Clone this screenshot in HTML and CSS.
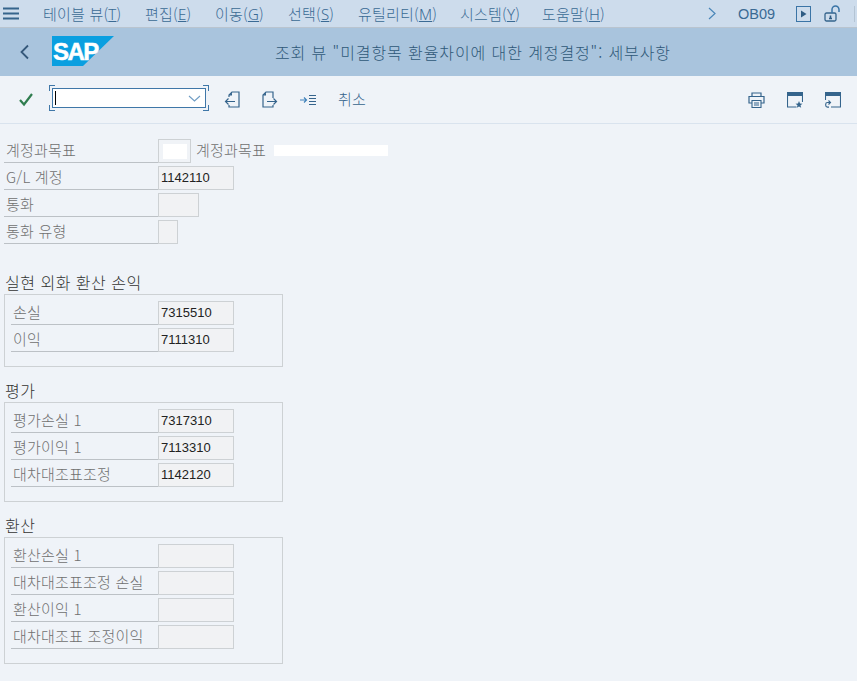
FILE: index.html
```html
<!DOCTYPE html>
<html lang="ko">
<head>
<meta charset="utf-8">
<title>SAP</title>
<link rel="stylesheet" href="styles.css">
</head>
<body>
<header class="menubar">
  <svg class="hamburger" width="18" height="13" viewBox="0 0 18 13"><path d="M1 1.500h16M1 6.500h16M1 11.500h16" stroke="#35648c" stroke-width="2.200"/></svg>
  <nav class="menus">
    <span class="m1">테이블 뷰(<u>T</u>)</span>
    <span class="m2">편집(<u>E</u>)</span>
    <span class="m3">이동(<u>G</u>)</span>
    <span class="m4">선택(<u>S</u>)</span>
    <span class="m5">유틸리티(<u>M</u>)</span>
    <span class="m6">시스템(<u>Y</u>)</span>
    <span class="m7">도움말(<u>H</u>)</span>
  </nav>
  <div class="menu-right">
    <svg width="8" height="13" viewBox="0 0 8 13"><path d="M1 1l6 5.500-6 5.500" fill="none" stroke="#4a86b8" stroke-width="1.200"/></svg>
    <span class="tcode">OB09</span>
    <svg class="play" width="15" height="16" viewBox="0 0 15 16"><rect x=".5" y=".5" width="14" height="15" fill="none" stroke="#3a74a6"/><path d="M5 4.500l5.500 3.500L5 11.500z" fill="#2f5c84"/></svg>
    <svg class="lock" width="18" height="17" viewBox="0 0 18 17"><rect x="1" y="8" width="11" height="8" rx="1.500" fill="none" stroke="#35648c" stroke-width="1.300"/><path d="M8 8V4.500a3.500 3.500 0 0 1 7 0V7" fill="none" stroke="#3a74a6" stroke-width="1.500"/><path d="M5 13.500h3M6.500 10.500v3" stroke="#2f5c84" stroke-width="1.600"/></svg>
    <span class="divider"></span>
  </div>
</header>

<div class="titlebar">
  <svg class="back" width="11" height="16" viewBox="0 0 11 16"><path d="M9 1.500L2.500 8 9 14.500" fill="none" stroke="#35587a" stroke-width="1.800"/></svg>
  <svg class="logo" width="62" height="30" viewBox="0 0 62 30"><path d="M0 0h62L31 30H0z" fill="#0a9fe0"/><text class="logo-text" x="1" y="24">SAP</text></svg>
  <h1 class="title">조회 뷰 "미결항목 환율차이에 대한 계정결정": 세부사항</h1>
</div>

<div class="toolbar">
  <svg class="check" width="16" height="15" viewBox="0 0 16 15"><path d="M2 8l4 4.500L14 2" fill="none" stroke="#2f7d4f" stroke-width="2.200"/></svg>
  <div class="combo-wrap">
    <span class="corner tl"></span><span class="corner tr"></span><span class="corner bl"></span><span class="corner br"></span>
    <div class="combo">
      <span class="caret"></span>
      <svg width="13" height="7" viewBox="0 0 13 7"><path d="M1 1l5.500 5L12 1" fill="none" stroke="#6f9cc4" stroke-width="1.100"/></svg>
    </div>
  </div>
  <div class="tools">
    <svg width="16" height="17" viewBox="0 0 16 17"><path d="M5 6V4l3-3h7v15H5v-2" fill="none" stroke="#35648c" stroke-width="1.200"/><path d="M5 4.500L8 1.500V4.500z" fill="#35648c"/><path d="M11 10.500H1.500M4.500 7.500l-3 3 3 3" fill="none" stroke="#35648c" stroke-width="1.200"/></svg>
    <svg width="16" height="17" viewBox="0 0 16 17"><path d="M11 7V1H4L1 4v12h10v-2" fill="none" stroke="#35648c" stroke-width="1.200"/><path d="M1 4.500L4 1.500V4.500z" fill="#35648c"/><path d="M5 10.500h9.500M11.500 7.500l3 3-3 3" fill="none" stroke="#35648c" stroke-width="1.200"/></svg>
    <svg width="16" height="12" viewBox="0 0 16 12"><path d="M0 6h6M4 3.500L6.500 6 4 8.500" fill="none" stroke="#3f82bb" stroke-width="1.200"/><path d="M9 1.500h7M9 4.500h7M9 7.500h7M9 10.500h7" stroke="#35648c" stroke-width="1.200"/></svg>
    <span class="cancel">취소</span>
  </div>
  <div class="tools-right">
    <svg width="17" height="16" viewBox="0 0 17 16"><path d="M4 4V1h9v3M4 11H1V4.500h15V11h-3" fill="none" stroke="#35648c" stroke-width="1.200"/><path d="M4 8.500h9v7H4zM6 11h5M6 13h5" fill="none" stroke="#35648c" stroke-width="1.100"/></svg>
    <svg width="16" height="16" viewBox="0 0 16 16"><path d="M.5 4v11h9M15.500 4v6" fill="none" stroke="#35648c" stroke-width="1.100"/><rect width="16" height="4" fill="#35648c"/><path d="M12 9l1 2.500 2.500.2-2 1.600.7 2.500-2.200-1.400-2.200 1.400.7-2.500-2-1.600 2.500-.2z" fill="#35648c"/></svg>
    <svg width="16" height="16" viewBox="0 0 16 16"><path d="M.5 4v4M15.500 4v11H6" fill="none" stroke="#35648c" stroke-width="1.100"/><rect width="16" height="4" fill="#35648c"/><path d="M5 10.500H2.500a1.800 1.800 0 0 0-1.800 1.800v1a1.800 1.800 0 0 0 1.800 1.800H4M3.500 8.500L5.500 10.500l-2 2" fill="none" stroke="#35648c" stroke-width="1.100"/></svg>
  </div>
</div>

<main class="content">
  <section class="top-rows">
    <div class="row">
      <label class="lbl">계정과목표</label>
      <span class="field f-chart"><span class="white-sm"></span></span>
      <span class="desc">계정과목표</span>
      <span class="white-lg"></span>
    </div>
    <div class="row"><label class="lbl">G/L 계정</label><span class="field f-76">1142110</span></div>
    <div class="row"><label class="lbl">통화</label><span class="field f-41"></span></div>
    <div class="row"><label class="lbl">통화 유형</label><span class="field f-20"></span></div>
  </section>

  <section class="group g1">
    <h2 class="g-title">실현 외화 환산 손익</h2>
    <div class="box box-1">
      <div class="row"><label class="lbl">손실</label><span class="field f-76">7315510</span></div>
      <div class="row"><label class="lbl">이익</label><span class="field f-76">7111310</span></div>
    </div>
  </section>

  <section class="group g2">
    <h2 class="g-title">평가</h2>
    <div class="box box-2">
      <div class="row"><label class="lbl">평가손실 1</label><span class="field f-76">7317310</span></div>
      <div class="row"><label class="lbl">평가이익 1</label><span class="field f-76">7113310</span></div>
      <div class="row"><label class="lbl">대차대조표조정</label><span class="field f-76">1142120</span></div>
    </div>
  </section>

  <section class="group g2">
    <h2 class="g-title">환산</h2>
    <div class="box box-3">
      <div class="row"><label class="lbl">환산손실 1</label><span class="field f-76"></span></div>
      <div class="row"><label class="lbl">대차대조표조정 손실</label><span class="field f-76"></span></div>
      <div class="row"><label class="lbl">환산이익 1</label><span class="field f-76"></span></div>
      <div class="row"><label class="lbl">대차대조표 조정이익</label><span class="field f-76"></span></div>
    </div>
  </section>
</main>
</body>
</html>
```
FILE: styles.css
```css
* { box-sizing: border-box; }
html, body { margin: 0; height: 100%; }
body {
  width: 857px;
  height: 681px;
  overflow: hidden;
  background: #eff3f8;
  font-family: "Noto Sans CJK KR", "Liberation Sans", sans-serif;
  font-size: 15px;
  font-weight: 300;
  letter-spacing: 0.2px;
  color: #707070;
}
.menubar {
  height: 28px;
  background: #cddcec;
  border-bottom: 1px solid #b9c4cf;
  display: flex;
  align-items: center;
  color: #3a6a94;
  padding-left: 2px;
}
.hamburger { flex: none; }
.menus { display: flex; margin-left: 23px; white-space: nowrap; font-size: 15px; }
.menus span { display: block; }
.m1 { width: 102px; }
.m2 { width: 70px; }
.m3 { width: 73px; }
.m4 { width: 70px; }
.m5 { width: 102px; }
.m6 { width: 82px; }
.menus u { font-family: "Noto Sans", "Liberation Sans", sans-serif; font-weight: 300; }
.menu-right { margin-left: auto; display: flex; align-items: center; }
.menu-right .tcode { font-family: "Liberation Sans", sans-serif; font-size: 14.500px; font-weight: 400; letter-spacing: 0; margin-left: 22px; width: 40px; }
.play { margin-left: 18px; }
.lock { margin-left: 13px; }
.divider { width: 1px; height: 16px; background: #b4c4d4; margin-left: 12px; margin-right: 2px; }

.titlebar {
  height: 48px;
  background: #a9c4dd;
  display: flex;
  align-items: center;
  position: relative;
  padding-left: 19px;
}
.back { flex: none; }
.logo { flex: none; margin: 0 0 2px 22px; }
.logo-text {
  font-family: "Liberation Sans", sans-serif;
  font-weight: 700;
  font-size: 24px;
  fill: #fff;
  stroke: #fff;
  stroke-width: 0.5px;
  letter-spacing: -1.500px;
}
.title {
  margin: 0;
  font-weight: 300;
  font-size: 16px;
  letter-spacing: 0.9px;
  color: #2f5878;
  position: absolute;
  left: 275px;
  top: 12px;
  white-space: nowrap;
}

.toolbar {
  height: 48px;
  border-bottom: 1px solid #d9e3ee;
  display: flex;
  align-items: center;
  padding-left: 18px;
}
.check { flex: none; }
.combo-wrap { position: relative; width: 160px; height: 26px; margin: 0 0 3px 15px; padding: 3px; }
.combo {
  height: 20px;
  width: 154px;
  background: #fff;
  border: 1px solid #3f77a8;
  display: flex;
  align-items: center;
  justify-content: space-between;
  padding: 0 4px 0 2px;
}
.caret { width: 1px; height: 14px; background: #000; }
.corner { position: absolute; width: 6px; height: 6px; border: 0 solid #3f77a8; }
.tl { left: 0; top: 0; border-width: 1.500px 0 0 1.500px; }
.tr { right: 0; top: 0; border-width: 1.500px 1.500px 0 0; }
.bl { left: 0; bottom: 0; border-width: 0 0 1.500px 1.500px; }
.br { right: 0; bottom: 0; border-width: 0 1.500px 1.500px 0; }
.tools { display: flex; align-items: center; gap: 22px; margin-left: 15px; }
.cancel { color: #35648c; font-size: 15px; margin-bottom: 3px; }
.tools-right { margin-left: auto; display: flex; align-items: center; gap: 22px; padding-right: 16px; }

.content { padding: 15px 0 0 4px; }
.row { display: flex; align-items: stretch; height: 24px; margin-bottom: 3px; }
.lbl {
  width: 154px;
  flex: none;
  border-bottom: 1px solid #bcc1c6;
  padding-left: 2px;
  line-height: 22px;
  white-space: nowrap;
}
.box .lbl { width: 147px; }
.field {
  flex: none;
  background: #f1f2f4;
  border: 1px solid #cdd1d4;
  font-family: "Liberation Sans", sans-serif;
  font-size: 13px;
  font-weight: 400;
  letter-spacing: 0;
  color: #222;
  line-height: 22px;
  padding-left: 2px;
}
.f-chart { width: 33px; display: flex; align-items: center; justify-content: center; padding: 0; background: #f0f3f7; }
.white-sm { width: 24px; height: 15px; background: #fff; }
.desc { margin-left: 5px; line-height: 22px; }
.white-lg { width: 114px; height: 11px; background: #fff; margin: 6px 0 0 8px; }
.f-76 { width: 76px; }
.f-41 { width: 41px; }
.f-20 { width: 20px; }

.group { width: 279px; }
.g1 { margin-top: 27px; }
.g2 { margin-top: 12px; }
.g-title { margin: 0 0 1px; font-size: 16px; font-weight: 300; letter-spacing: 0.5px; color: #333; line-height: 22px; height: 22px; padding-left: 1px; }
.box { border: 1px solid #cdd1d4; padding: 6px 0 0 6px; }
.box-1 { height: 73px; }
.box-2 { height: 100px; }
.box-3 { height: 127px; }
```
